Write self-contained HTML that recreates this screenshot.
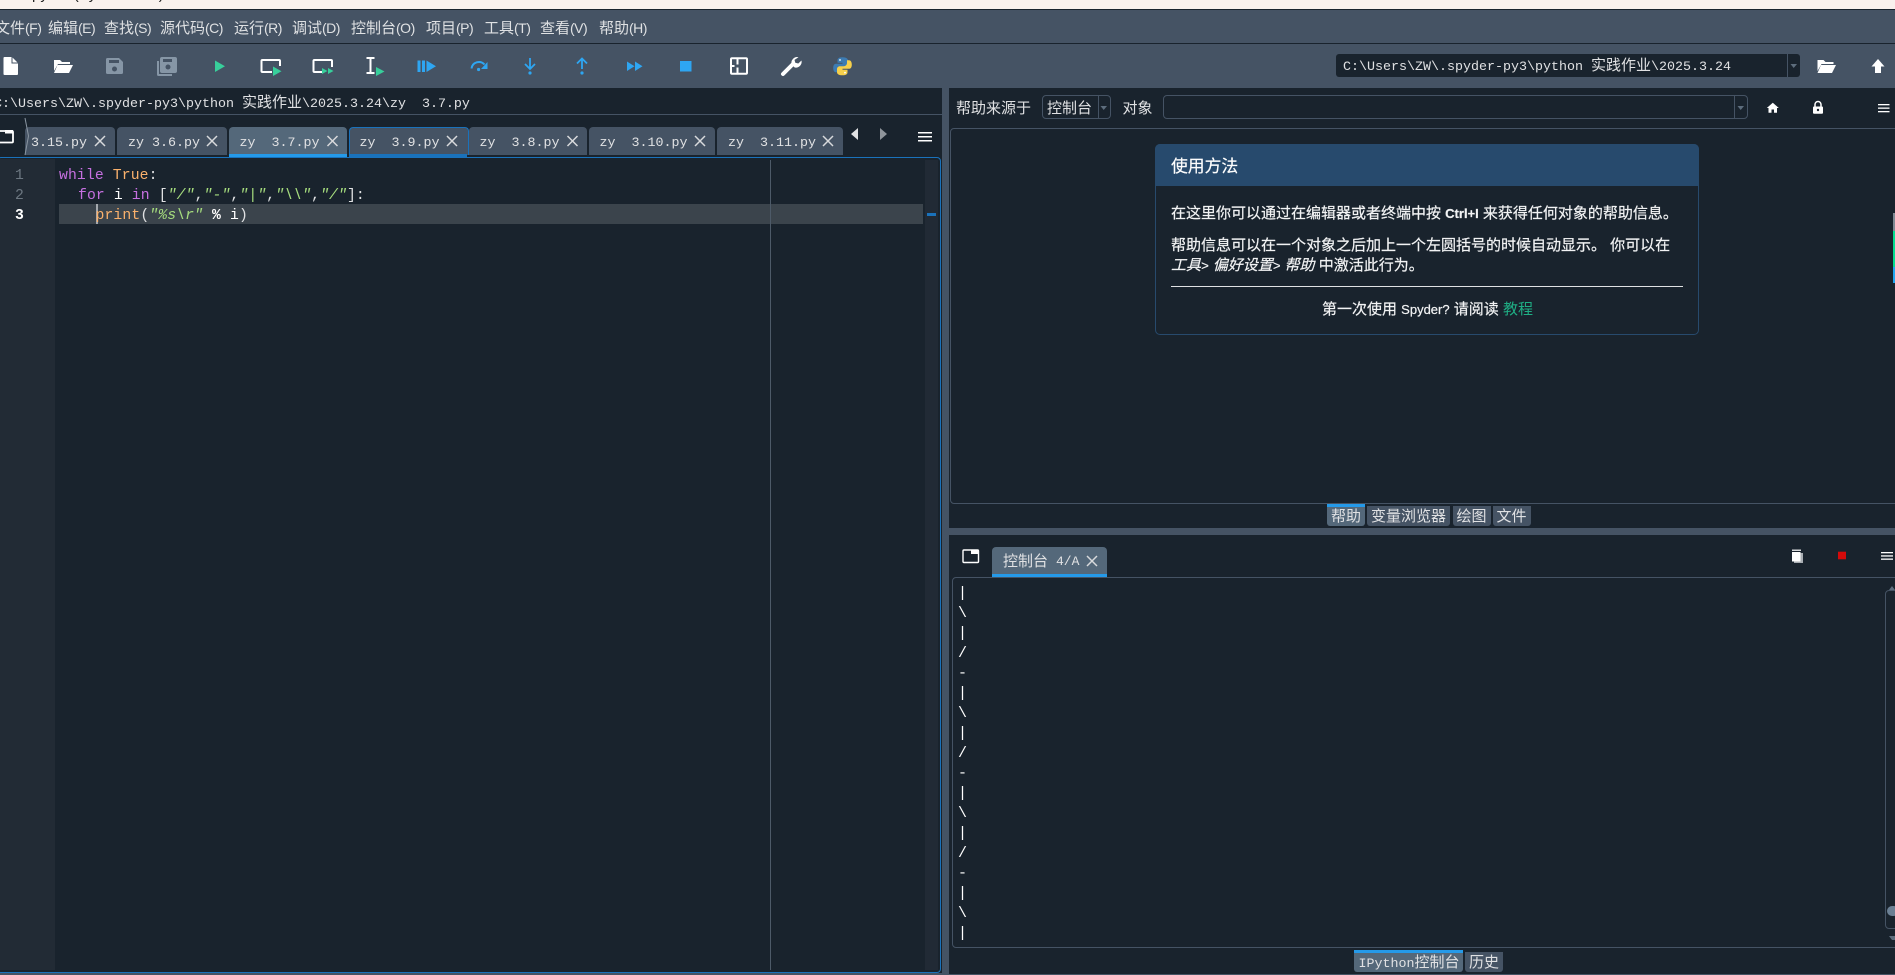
<!DOCTYPE html>
<html lang="zh-CN">
<head>
<meta charset="utf-8">
<title>Spyder</title>
<style>
html,body{margin:0;padding:0;width:1895px;height:975px;overflow:hidden;background:#19232d}
body{position:relative;font-family:"Liberation Sans","Noto Sans CJK SC",sans-serif;color:#e0e1e3}
.b{position:absolute;box-sizing:border-box}
.t{position:absolute;white-space:pre;line-height:20px;height:20px}
.m{font-size:15px;color:#dfe1e3}
.m i{font-style:normal;font-size:14px;letter-spacing:-.5px}
.mono{font-family:"Liberation Mono","WenQuanYi Zen Hei",monospace;font-size:13.33px;color:#e0e1e3}
.mono b{font-family:"WenQuanYi Zen Hei","Noto Sans CJK SC",sans-serif;font-weight:400;font-size:15px}
.ui{font-family:"WenQuanYi Zen Hei","Noto Sans CJK SC",sans-serif;font-size:15px;color:#e0e1e3}
.tab{position:absolute;top:127px;height:28px;background:#455364;border-radius:4px 4px 0 0}
.btab{position:absolute;background:#455364;border-radius:0 0 3px 3px}
.act{background:#54687a}
.code{position:absolute;white-space:pre;font-family:"Liberation Mono",monospace;font-size:14.75px;letter-spacing:.11px;line-height:20px;height:20px;color:#e0e1e3}
.k{color:#c670e0}.o{color:#fab16c}.s{color:#a6dd7e;font-style:italic}.w{color:#fff}
.cn{position:absolute;left:958px;font-family:"Liberation Mono",monospace;font-size:15px;line-height:20px;height:20px;color:#fff;white-space:pre}
.h{position:absolute;white-space:pre;font-family:"Liberation Sans","Noto Sans CJK SC",sans-serif;font-size:15px;line-height:20px;height:20px;color:#f2f3f4;-webkit-text-stroke:.2px #f2f3f4}
</style>
</head>
<body>
<!-- title strip -->
<div class="b" style="left:0;top:0;width:1895px;height:9px;background:#f9f1ed;overflow:hidden">
  <div class="t" style="left:22px;top:-15px;font-size:15px;color:#222">Spyder (Python 3.12)</div>
</div>
<div class="b" style="left:0;top:9px;width:1895px;height:1px;background:#19232d"></div>
<!-- menu -->
<div class="b" style="left:0;top:10px;width:1895px;height:33px;background:#455364"></div>
<div class="b" style="left:0;top:43px;width:1895px;height:1px;background:#19232d"></div>
<div class="b" style="left:0;top:44px;width:1895px;height:44px;background:#455364"></div>
<div class="t m" style="left:-5px;top:18px">文件<i>(F)</i></div>
<div class="t m" style="left:48px;top:18px">编辑<i>(E)</i></div>
<div class="t m" style="left:104px;top:18px">查找<i>(S)</i></div>
<div class="t m" style="left:160px;top:18px">源代码<i>(C)</i></div>
<div class="t m" style="left:234px;top:18px">运行<i>(R)</i></div>
<div class="t m" style="left:292px;top:18px">调试<i>(D)</i></div>
<div class="t m" style="left:351px;top:18px">控制台<i>(O)</i></div>
<div class="t m" style="left:426px;top:18px">项目<i>(P)</i></div>
<div class="t m" style="left:484px;top:18px">工具<i>(T)</i></div>
<div class="t m" style="left:540px;top:18px">查看<i>(V)</i></div>
<div class="t m" style="left:599px;top:18px">帮助<i>(H)</i></div>

<!-- path combobox -->
<div class="b" style="left:1336px;top:54px;width:464px;height:23px;background:#19232d;border-radius:3px"></div>
<div class="b" style="left:1787px;top:54px;width:1px;height:23px;background:#455364"></div>
<div class="t mono" style="left:1343px;top:55px">C:\Users\ZW\.spyder-py3\python <b>实践作业</b>\2025.3.24</div>

<!-- editor path -->
<div class="t mono" style="left:-6px;top:92px">C:\Users\ZW\.spyder-py3\python <b>实践作业</b>\2025.3.24\zy  3.7.py</div>
<div class="b" style="left:0;top:114px;width:942px;height:1px;background:#455364"></div>

<!-- splitters -->
<div class="b" style="left:942px;top:88px;width:7px;height:887px;background:#455364"></div>
<div class="b" style="left:949px;top:528px;width:946px;height:7px;background:#455364"></div>
<div class="b" style="left:0;top:973px;width:942px;height:2px;background:#455364"></div>

<!-- editor tabs -->
<div class="tab" style="left:25px;width:90px"></div>
<div class="tab" style="left:117px;width:110px"></div>
<div class="tab act" style="left:229px;width:118px;height:27px"></div>
<div class="tab" style="left:349px;width:118px;height:27px;border:1px solid #1a72bb;border-bottom:0"></div>
<div class="tab" style="left:469px;width:118px"></div>
<div class="tab" style="left:589px;width:126px"></div>
<div class="tab" style="left:717px;width:126px"></div>
<div class="b" style="left:229px;top:154px;width:118px;height:3px;background:#259ae9"></div>
<div class="b" style="left:349px;top:154px;width:118px;height:3px;background:#1a72bb"></div>
<div class="t mono" style="left:31px;top:134px">3.15.py</div>
<div class="t mono" style="left:128px;top:134px">zy 3.6.py</div>
<div class="t mono" style="left:239.5px;top:134px">zy  3.7.py</div>
<div class="t mono" style="left:359.5px;top:134px">zy  3.9.py</div>
<div class="t mono" style="left:479.5px;top:134px">zy  3.8.py</div>
<div class="t mono" style="left:599.5px;top:134px">zy  3.10.py</div>
<div class="t mono" style="left:728px;top:134px">zy  3.11.py</div>

<!-- editor frame -->
<div class="b" style="left:-3px;top:157px;width:944px;height:816px;border:1px solid #1a72bb;border-radius:4px"></div>
<div class="b" style="left:0;top:159px;width:55px;height:811px;background:#222b35"></div>
<div class="b" style="left:925px;top:160px;width:13px;height:810px;background:#212a35"></div>
<div class="b" style="left:59px;top:204px;width:864px;height:20px;background:#3b444c"></div>
<div class="b" style="left:770px;top:160px;width:1px;height:810px;background:#4d5a68"></div>
<div class="b" style="left:927px;top:213px;width:9px;height:3px;background:#1a72bb"></div>
<div class="b" style="left:95.500px;top:204px;width:2px;height:20px;background:#a4a9ae"></div>
<div class="code" style="left:15px;top:166px;color:#6c7781">1</div>
<div class="code" style="left:15px;top:186px;color:#6c7781">2</div>
<div class="code" style="left:15px;top:205.500px;color:#fff;font-weight:700">3</div>
<div class="code" style="left:59px;top:166px"><span class="k">while</span> <span class="o">True</span>:</div>
<div class="code" style="left:78px;top:186px"><span class="k">for</span> <span class="w">i</span> <span class="k">in</span> [<span class="s">"/"</span>,<span class="s">"-"</span>,<span class="s">"|"</span>,<span class="s">"\\"</span>,<span class="s">"/"</span>]:</div>
<div class="code" style="left:95.500px;top:205.500px"><span class="o">print</span>(<span class="s">"%s\r"</span> <b class="w">%</b> <span class="w">i</span>)</div>

<!-- help pane -->
<div class="t ui" style="left:956px;top:98px">帮助来源于</div>
<div class="b" style="left:1042px;top:95px;width:69px;height:24px;border:1px solid #455364;border-radius:4px"></div>
<div class="b" style="left:1098px;top:95px;width:1px;height:24px;background:#455364"></div>
<div class="t ui" style="left:1047px;top:98px">控制台</div>
<div class="t ui" style="left:1122.500px;top:98px">对象</div>
<div class="b" style="left:1163px;top:95px;width:585px;height:24px;border:1px solid #455364;border-radius:4px"></div>
<div class="b" style="left:1734px;top:95px;width:1px;height:24px;background:#455364"></div>
<div class="b" style="left:950px;top:128px;width:960px;height:376px;border:1px solid #455364;border-radius:4px"></div>

<!-- help card -->
<div class="b" style="left:1155px;top:144px;width:544px;height:191px;border:1px solid #274a6d;border-radius:5px"></div>
<div class="b" style="left:1155px;top:144px;width:544px;height:42px;background:#274a6d;border-radius:5px 5px 0 0"></div>
<div class="h" style="left:1171px;top:157px;font-size:16.8px;color:#fff">使用方法</div>
<div class="h" style="left:1171px;top:204px">在这里你可以通过在编辑器或者终端中按 <b style="font-size:13px">Ctrl+I</b> 来获得任何对象的帮助信息。</div>
<div class="h" style="left:1171px;top:236px">帮助信息可以在一个对象之后加上一个左圆括号的时候自动显示。 你可以在</div>
<div class="h" style="left:1171px;top:256px"><i>工具<span style="font-size:13px">&gt;</span> 偏好设置<span style="font-size:13px">&gt;</span> 帮助</i> 中激活此行为。</div>
<div class="b" style="left:1171px;top:286px;width:512px;height:1px;background:#dfe1e3"></div>
<div class="h" style="left:1322px;top:300px">第一次使用 <span style="font-size:13px">Spyder?</span> 请阅读 <span style="color:#1fae84;-webkit-text-stroke:0">教程</span></div>

<!-- help bottom tabs -->
<div class="btab act" style="left:1327px;top:504px;width:38px;height:22px;border-top:3px solid #259ae9;box-sizing:border-box"></div>
<div class="btab" style="left:1367px;top:506px;width:83px;height:20px"></div>
<div class="btab" style="left:1452.5px;top:506px;width:38px;height:20px"></div>
<div class="btab" style="left:1492.5px;top:506px;width:38px;height:20px"></div>
<div class="t ui" style="left:1331px;top:506px">帮助</div>
<div class="t ui" style="left:1371px;top:506px">变量浏览器</div>
<div class="t ui" style="left:1456.5px;top:506px">绘图</div>
<div class="t ui" style="left:1496.5px;top:506px">文件</div>

<!-- console -->
<div class="tab act" style="left:992px;top:547px;width:115px;height:27px"></div>
<div class="b" style="left:992px;top:574px;width:115px;height:3px;background:#259ae9"></div>
<div class="t ui" style="left:1003px;top:551px;letter-spacing:0">控制台</div>
<div class="t mono" style="left:1056px;top:552px;font-size:13px">4/A</div>
<div class="b" style="left:952px;top:577px;width:960px;height:371px;border:1px solid #455364;border-radius:4px"></div>
<div class="cn" style="top:584px">|</div><div class="cn" style="top:604px">\</div><div class="cn" style="top:624px">|</div><div class="cn" style="top:644px">/</div><div class="cn" style="top:664px">-</div><div class="cn" style="top:684px">|</div><div class="cn" style="top:704px">\</div><div class="cn" style="top:724px">|</div><div class="cn" style="top:744px">/</div><div class="cn" style="top:764px">-</div><div class="cn" style="top:784px">|</div><div class="cn" style="top:804px">\</div><div class="cn" style="top:824px">|</div><div class="cn" style="top:844px">/</div><div class="cn" style="top:864px">-</div><div class="cn" style="top:884px">|</div><div class="cn" style="top:904px">\</div><div class="cn" style="top:924px">|</div>
<div class="b" style="left:1885px;top:590px;width:14px;height:339px;border:1px solid #455364;border-radius:4px"></div>
<div class="b" style="left:1887px;top:906px;width:12px;height:10px;background:#6b8094;border-radius:5px"></div>

<!-- console bottom tabs -->
<div class="btab act" style="left:1354px;top:950px;width:109px;height:22px;border-top:3px solid #259ae9;box-sizing:border-box"></div>
<div class="btab" style="left:1465px;top:952px;width:38px;height:20px"></div>
<div class="t mono" style="left:1358.5px;top:952px">IPython<b>控制台</b></div>
<div class="t ui" style="left:1469px;top:952px">历史</div>
<div class="b" style="left:949px;top:974px;width:946px;height:1px;background:#455364"></div>

<!-- right edge artifact -->
<div class="b" style="left:1893px;top:213px;width:2px;height:18px;background:#7f8a94"></div>
<div class="b" style="left:1893px;top:231px;width:2px;height:36px;background:#05dd90"></div>
<div class="b" style="left:1893px;top:267px;width:2px;height:16px;background:#22a6f0"></div>

<!-- icons -->
<svg width="1895" height="975" viewBox="0 0 1895 975" style="position:absolute;left:0;top:0;pointer-events:none">
  <!-- new -->
  <path d="M3.5 58a1 1 0 0 1 1-1H12L18 63V74a1 1 0 0 1-1 1H4.5a1 1 0 0 1-1-1Z" fill="#fff"/>
  <path d="M12 57V63H18" fill="none" stroke="#455364"/>
  <!-- open -->
  <path d="M54 60h6l2 2h8v2H58l-4 7Z M57.5 65H73L69 73H54Z" fill="#fff"/>
  <!-- save -->
  <path d="M107.5 58H119L123 62V72.500a1.500 1.500 0 0 1-1.500 1.500H107.500a1.500 1.500 0 0 1-1.500-1.500V59.500a1.500 1.500 0 0 1 1.500-1.500Z" fill="#8696a6"/>
  <rect x="109" y="60" width="10" height="3" fill="#455364"/>
  <circle cx="114.500" cy="69" r="2.500" fill="#455364"/>
  <!-- save all -->
  <path d="M162 57H175a2 2 0 0 1 2 2V71a2 2 0 0 1-2 2H162a2 2 0 0 1-2-2V59a2 2 0 0 1 2-2Z" fill="#8696a6"/>
  <path d="M157 61H159V74H172V76H158.500a1.500 1.500 0 0 1-1.500-1.500Z" fill="#8696a6"/>
  <rect x="163" y="59" width="9" height="3" fill="#455364"/>
  <circle cx="168" cy="67" r="2.500" fill="#455364"/>
  <!-- run -->
  <path d="M215 60.500L225 66.300 215 72Z" fill="#38cf9b"/>
  <!-- run cell -->
  <path d="M272 72H262.500a1 1 0 0 1-1-1V61a1 1 0 0 1 1-1H279a1 1 0 0 1 1 1V66" fill="none" stroke="#fff" stroke-width="2"/>
  <path d="M273 66.500L281.500 71.300 273 76Z" fill="#38cf9b"/>
  <!-- run cell advance -->
  <path d="M322 72H314.500a1 1 0 0 1-1-1V61a1 1 0 0 1 1-1H331a1 1 0 0 1 1 1V67" fill="none" stroke="#fff" stroke-width="2"/>
  <path d="M322 68L327.500 71 322 74Z M328 68L333.500 71 328 74Z" fill="#38cf9b"/>
  <!-- run selection -->
  <path d="M366.500 58H374.500M370.500 58V73M366.500 73H374.500" fill="none" stroke="#fff" stroke-width="2"/>
  <path d="M376 67L384.500 71.500 376 76Z" fill="#38cf9b"/>
  <!-- debug -->
  <path d="M417.500 60.500H420.500V72H417.500Z M422 60.500H425V72H422Z M426.500 60.500L436 66.300 426.500 72Z" fill="#2ea6f2"/>
  <!-- step over -->
  <path d="M471.500 68.500A7.500 7.500 0 0 1 484.500 64.500" fill="none" stroke="#2ea6f2" stroke-width="2"/>
  <path d="M487.500 62V69H481Z" fill="#2ea6f2"/>
  <circle cx="478.600" cy="69.500" r="1.600" fill="#2ea6f2"/>
  <!-- step in -->
  <path d="M530 58V68M525 64L530 69 535 64" fill="none" stroke="#2ea6f2" stroke-width="1.800"/>
  <circle cx="530" cy="73" r="1.600" fill="#2ea6f2"/>
  <!-- step out -->
  <path d="M582 59V69M577 63.500L582 58.500 587 63.500" fill="none" stroke="#2ea6f2" stroke-width="1.800"/>
  <circle cx="582" cy="73" r="1.600" fill="#2ea6f2"/>
  <!-- continue -->
  <path d="M627 61.500L634.500 66.300 627 71Z M635 61.500L642.500 66.300 635 71Z" fill="#2ea6f2"/>
  <!-- stop -->
  <rect x="680" y="61" width="11.500" height="10.500" fill="#2ea6f2"/>
  <!-- panels -->
  <rect x="731" y="58.300" width="16" height="15.500" rx="1" fill="none" stroke="#fff" stroke-width="2"/>
  <rect x="736.500" y="58" width="2" height="6.500" fill="#fff"/><rect x="736.500" y="67.500" width="2" height="6.500" fill="#fff"/>
  <rect x="732" y="65" width="2.500" height="2" fill="#fff"/>
  <!-- wrench -->
  <path d="M783 74L793 64" stroke="#fff" stroke-width="4" stroke-linecap="round" fill="none"/>
  <path d="M798.500 57.200a5.800 5.800 0 0 0-6.800 7.500l3 2.800a5.800 5.800 0 0 0 6.800-7l-3.200 3-3-.8-.8-2.800Z" fill="#fff"/>
  <!-- python -->
  <path d="M842.500 57.300c-4.500 0-5 1.800-5 3.200v2.300h5v1h-6.500c-1.700 0-2.800 1.500-2.800 4.200s1.200 4.300 2.800 4.300h2v-2.600c0-2 1.400-3.300 3.300-3.300h3.700c1.800 0 3-1.200 3-3v-2.900c0-1.700-1.500-3.200-5.500-3.200Z" fill="#3d7cb3"/>
  <path d="M842.500 75.300c4.500 0 5-1.800 5-3.200v-2.300h-5v-1h6.500c1.700 0 2.800-1.500 2.800-4.200s-1.200-4.300-2.800-4.300h-2v2.600c0 2-1.400 3.300-3.300 3.300h-3.700c-1.800 0-3 1.200-3 3v2.900c0 1.700 1.500 3.200 5.500 3.200Z" fill="#f7d04b"/>
  <circle cx="840" cy="60" r=".9" fill="#fff"/><circle cx="845" cy="72.600" r=".9" fill="#fff"/>
  <!-- combo arrows -->
  <path d="M1790.500 64H1797L1793.700 68Z" fill="#5d6d7d"/>
  <path d="M1100.500 106H1107L1103.700 110Z" fill="#5d6d7d"/>
  <path d="M1737.500 106H1744L1740.700 110Z" fill="#5d6d7d"/>
  <!-- right folder -->
  <path d="M1817.500 60h6l2 2h8v2h-12l-4 7Z M1821 65H1836L1832 73H1817.500Z" fill="#fff"/>
  <!-- up arrow -->
  <path d="M1878 59L1884.500 66.500H1881V73H1875V66.500H1871.500Z" fill="#fff"/>
  <!-- tab chevron -->
  <path d="M25 118L28.500 136 25 155" fill="none" stroke="#8a96a2" stroke-width="1"/>
  <!-- browse tabs icon -->
  <rect x="-2" y="131" width="15" height="11.500" rx="1" fill="none" stroke="#fff" stroke-width="1.800"/>
  <rect x="5" y="130" width="8" height="3.500" fill="#fff"/>
  <rect x="963" y="550" width="15.500" height="12.500" rx="1" fill="none" stroke="#fff" stroke-width="1.400"/>
  <rect x="971" y="550" width="8" height="4" fill="#fff"/>
  <!-- tab close X -->
  <g fill="none" stroke="#d8dadc" stroke-width="1.500">
    <path d="M95 136L105 146M105 136L95 146"/>
    <path d="M207 136L217 146M217 136L207 146"/>
    <path d="M327.500 136L337.500 146M337.500 136L327.500 146"/>
    <path d="M447 136L457 146M457 136L447 146"/>
    <path d="M567.500 136L577.500 146M577.500 136L567.500 146"/>
    <path d="M695 136L705 146M705 136L695 146"/>
    <path d="M823 136L833 146M833 136L823 146"/>
    <path d="M1087 556L1097 566M1097 556L1087 566"/>
  </g>
  <!-- tab scroll arrows -->
  <path d="M858 128V140L851 134Z" fill="#e0e1e3"/>
  <path d="M880 128V140L887 134Z" fill="#8f959b"/>
  <!-- hamburgers -->
  <g fill="#fff">
    <rect x="918" y="132" width="14" height="1.500"/><rect x="918" y="136" width="14" height="1.500"/><rect x="918" y="140" width="14" height="1.500"/>
    <rect x="1878" y="104" width="11.500" height="1.300"/><rect x="1878" y="107.500" width="11.500" height="1.300"/><rect x="1878" y="111" width="11.500" height="1.300"/>
    <rect x="1881" y="552" width="12" height="1.300"/><rect x="1881" y="555.300" width="12" height="1.300"/><rect x="1881" y="558.500" width="12" height="1.300"/>
  </g>
  <!-- home -->
  <path d="M1772.800 102.700L1778.800 108H1777V112.800H1774V109.500H1771.500V112.800H1768.500V108H1766.800Z" fill="#fff"/>
  <!-- lock -->
  <path d="M1815 106.500V104.500a3 3 0 0 1 6 0V106.500" fill="none" stroke="#fff" stroke-width="1.500"/>
  <rect x="1813" y="106.500" width="10" height="7.300" rx="1" fill="#fff"/>
  <circle cx="1818" cy="110" r="1.200" fill="#19232d"/>
  <!-- trash -->
  <rect x="1794" y="553" width="9" height="10" fill="#a8adb2"/>
  <rect x="1792" y="552" width="8.500" height="9.500" fill="#fff"/>
  <rect x="1792" y="549.500" width="9" height="1.500" fill="#d8dadc"/>
  <!-- console stop -->
  <rect x="1838" y="551.700" width="8" height="7.600" fill="#d40a0a"/>
  <!-- console scroll arrows -->
  <path d="M1889 936H1895V940H1892Z" fill="#5d6d7d"/>
  <path d="M1889 590L1892 586 1895 590Z" fill="#5d6d7d"/>
</svg>
</body>
</html>
